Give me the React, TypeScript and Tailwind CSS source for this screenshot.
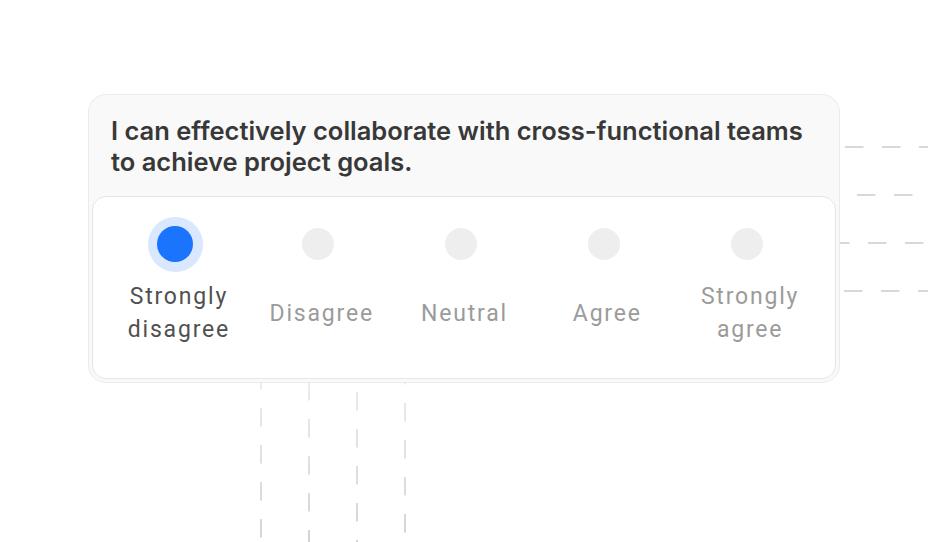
import React from 'react';

const options = [
  { label: ['Strongly', 'disagree'], selected: true },
  { label: ['Disagree'], selected: false },
  { label: ['Neutral'], selected: false },
  { label: ['Agree'], selected: false },
  { label: ['Strongly', 'agree'], selected: false },
];

// decorative dashed grid behind the card
function DashedLines() {
  const horizontal = [
    { y: 147, offset: 845 },
    { y: 195, offset: 857 },
    { y: 243, offset: 831 },
    { y: 291, offset: 844 },
  ];
  const vertical = [
    { x: 261, offset: 371 },
    { x: 309, offset: 382 },
    { x: 357, offset: 392 },
    { x: 405, offset: 366 },
  ];
  return (
    <svg className="pointer-events-none absolute inset-0" width="928" height="542" viewBox="0 0 928 542">
      <defs>
        <linearGradient id="vfade" x1="0" y1="380" x2="0" y2="542" gradientUnits="userSpaceOnUse">
          <stop offset="0" stopColor="#e6e6e6" />
          <stop offset="1" stopColor="#c6c6c6" />
        </linearGradient>
      </defs>
      {horizontal.map((h) => (
        <line
          key={h.y}
          x1={h.offset - 37 * 8}
          y1={h.y}
          x2={928}
          y2={h.y}
          stroke="#cccccc"
          strokeWidth="1.5"
          strokeDasharray="18.5 18.5"
        />
      ))}
      {vertical.map((v) => (
        <line
          key={v.x}
          x1={v.x}
          y1={v.offset - 37 * 6}
          x2={v.x}
          y2={542}
          stroke="url(#vfade)"
          strokeWidth="1.5"
          strokeDasharray="18.5 18.5"
        />
      ))}
    </svg>
  );
}

function Radio({ selected }: { selected: boolean }) {
  if (selected) {
    return (
      <div className="flex h-[55px] w-[55px] items-center justify-center rounded-full bg-[#d9e7ff]">
        <div className="h-[36px] w-[36px] rounded-full bg-[#1b74fd]" />
      </div>
    );
  }
  return <div className="h-[32px] w-[32px] rounded-full bg-[#eeeeee]" />;
}

export default function App() {
  return (
    <div className="relative h-[542px] w-[928px] overflow-hidden bg-white">
      <DashedLines />
      <div className="relative ml-[88px] pt-[94px]">
        <div className="w-[752px] rounded-[18px] border border-[#ebebeb] bg-[#f9f9f9] p-[3px]">
          <p
            className="px-[19px] pt-[17px] pb-[19px] text-[25.5px] leading-[31px] font-semibold text-[#383838]"
            style={{ fontFamily: 'Inter, "Liberation Sans", sans-serif' }}
          >
            I can effectively collaborate with cross-functional teams
            <br />
            to achieve project goals.
          </p>
          <div className="rounded-[14px] border border-[#e6e6e6] bg-white pt-[19px] pb-[31px] pl-[11px] pr-[17px]">
            <div className="grid grid-cols-5">
              {options.map((o, i) => (
                <div key={i} className="flex flex-col items-center">
                  <div className="flex h-[56px] items-center justify-center">
                    <Radio selected={o.selected} />
                  </div>
                  <div
                    className={`mt-[7px] flex h-[68px] flex-col items-center justify-center pl-[7px] text-center text-[23px] leading-[33px] tracking-[1.8px] ${
                      o.selected ? 'text-[#505050]' : 'text-[#9b9b9b]'
                    }`}
                    style={{ fontFamily: 'Roboto, "Liberation Sans", sans-serif' }}
                  >
                    {o.label.map((l) => (
                      <span key={l}>{l}</span>
                    ))}
                  </div>
                </div>
              ))}
            </div>
          </div>
        </div>
      </div>
    </div>
  );
}
